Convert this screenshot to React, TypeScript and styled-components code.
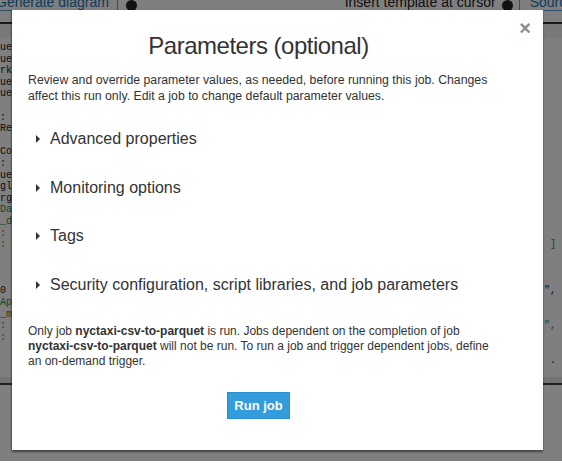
import React from "react";
import styled, { createGlobalStyle } from "styled-components";

const GlobalStyle = createGlobalStyle`
  html, body { margin: 0; padding: 0; background: #ffffff; }
  body { font-family: "Liberation Sans", Arial, sans-serif; }
`;

const Page = styled.div`
  position: relative;
  height: 461px;
  overflow: hidden;
  background: #ffffff;
`;

const Toolbar = styled.div`
  display: flex;
  align-items: flex-end;
  height: 10px;
  border-bottom: 1px solid #5b9bd1;
  overflow: hidden;
`;

const ToolText = styled.span<{ $blue?: boolean }>`
  height: 16px;
  line-height: 16px;
  font-size: 14px;
  white-space: nowrap;
  color: ${(p) => (p.$blue ? "#2476b8" : "#222")};
`;

const ToolSep = styled.div<{ $gapL: number; $gapR: number }>`
  align-self: stretch;
  width: 1px;
  margin: 0 ${(p) => p.$gapR}px 0 ${(p) => p.$gapL}px;
  background: #5b9bd1;
`;

const InfoDot = styled.span<{ $gapL?: number }>`
  width: 11px;
  height: 11px;
  border-radius: 50%;
  background: #222;
  margin: 0 0 -1px ${(p) => p.$gapL ?? 0}px;
`;

const Spacer = styled.div`
  flex: 1;
`;

const TabStrip = styled.div`
  height: 11px;
  border-bottom: 2px solid #333;
`;

const SubBar = styled.div`
  height: 14px;
  background: #f2f2f2;
`;

const Code = styled.div`
  padding-top: 4px;
  font-family: "Liberation Mono", monospace;
  font-size: 10px;
  line-height: 11.6px;
  height: 335px;
`;

const CodeLine = styled.div<{ $green?: boolean }>`
  display: flex;
  justify-content: space-between;
  height: 11.6px;
  white-space: pre;
  color: ${(p) => (p.$green ? "#2f8a4a" : "#1a1a1a")};
  padding-right: 6px;
`;

const BottomBand = styled.div`
  height: 6px;
  background: #e8e8e8;
  border-bottom: 2px solid #444;
`;

const Overlay = styled.div`
  position: absolute;
  inset: 0;
  background: rgba(0, 0, 0, 0.5);
  padding: 10px 19px 0 12px;
  display: flex;
  align-items: flex-start;
`;

const Modal = styled.div`
  position: relative;
  width: 531px;
  box-sizing: border-box;
  background: #ffffff;
  padding: 22px 54px 31px 16px;
  box-shadow: 0 2px 2px rgba(0, 0, 0, 0.45), -1px 0 1px rgba(0, 0, 0, 0.2);
  color: #333;
`;

const Close = styled.span`
  position: absolute;
  top: 6px;
  right: 12px;
  font-size: 20px;
  font-weight: bold;
  color: #8c8c8c;
  line-height: 24px;
`;

const Title = styled.h2`
  margin: 0;
  font-size: 24px;
  letter-spacing: -0.5px;
  line-height: 28px;
  font-weight: normal;
  text-align: center;
  color: #333;
`;

const Desc = styled.p`
  margin: 12px 0 0;
  font-size: 12.3px;
  line-height: 16px;
`;

const Sections = styled.div`
  margin-top: 11px;
`;

const Section = styled.div`
  display: flex;
  align-items: center;
  height: 48.5px;
  font-size: 16px;
`;

const Caret = styled.span`
  width: 0;
  height: 0;
  margin: 0 10px 0 8px;
  border-left: 4px solid #333;
  border-top: 4px solid transparent;
  border-bottom: 4px solid transparent;
`;

const Label = styled.span`
  line-height: 18px;
`;

const Note = styled.p`
  margin: 15px 0 0;
  font-size: 12px;
  line-height: 15px;
`;

const Actions = styled.div`
  display: flex;
  justify-content: center;
  margin-top: 23px;
`;

const RunButton = styled.button`
  height: 27px;
  padding: 0 6px;
  border: 1px solid #2a8fd0;
  background: #329cdd;
  color: #ffffff;
  font-family: "Liberation Sans", Arial, sans-serif;
  font-size: 13px;
  font-weight: bold;
  border-radius: 0;
`;

const codeLines: { l: string; r?: string; g?: boolean }[] = [
  { l: "ue" }, { l: "ue" }, { l: "rk" }, { l: "ue" }, { l: "ue" }, { l: "" },
  { l: ": [" }, { l: "Res" }, { l: "" }, { l: "Cor" }, { l: ": =" }, { l: "ueC" },
  { l: "glu" }, { l: "rgs" }, { l: "Dat", g: true }, { l: "_dc", g: true }, { l: ": c", g: true },
  { l: ": [", g: true, r: "]" }, { l: "" }, { l: "" }, { l: "" }, { l: "0 =", r: "\"," },
  { l: "App", g: true }, { l: "_mc", g: true }, { l: ": c", g: true, r: "\"," }, { l: ": [", g: true },
  { l: "" }, { l: "", r: ". ." },
];

export default function App() {
  return (
    <>
      <GlobalStyle />
      <Page>
        <Toolbar>
          <ToolText $blue style={{ marginLeft: -4 }}>Generate diagram</ToolText>
          <ToolSep $gapL={8} $gapR={8} />
          <InfoDot />
          <Spacer />
          <ToolText>Insert template at cursor</ToolText>
          <InfoDot $gapL={6} />
          <ToolSep $gapL={6} $gapR={10} />
          <ToolText $blue style={{ marginRight: -12 }}>Source</ToolText>
        </Toolbar>
        <TabStrip />
        <SubBar />
        <Code>
          {codeLines.map((c, i) => (
            <CodeLine key={i} $green={c.g}>
              <span>{c.l}</span>
              <span>{c.r ?? ""}</span>
            </CodeLine>
          ))}
        </Code>
        <BottomBand />
        <Overlay>
          <Modal>
            <Close>×</Close>
            <Title>Parameters (optional)</Title>
            <Desc>
              Review and override parameter values, as needed, before running this job. Changes
              affect this run only. Edit a job to change default parameter values.
            </Desc>
            <Sections>
              {[
                "Advanced properties",
                "Monitoring options",
                "Tags",
                "Security configuration, script libraries, and job parameters",
              ].map((s) => (
                <Section key={s}>
                  <Caret />
                  <Label>{s}</Label>
                </Section>
              ))}
            </Sections>
            <Note>
              Only job <b>nyctaxi-csv-to-parquet</b> is run. Jobs dependent on the completion of job{" "}
              <b>nyctaxi-csv-to-parquet</b> will not be run. To run a job and trigger dependent jobs,
              define an on-demand trigger.
            </Note>
            <Actions>
              <RunButton>Run job</RunButton>
            </Actions>
          </Modal>
        </Overlay>
      </Page>
    </>
  );
}
